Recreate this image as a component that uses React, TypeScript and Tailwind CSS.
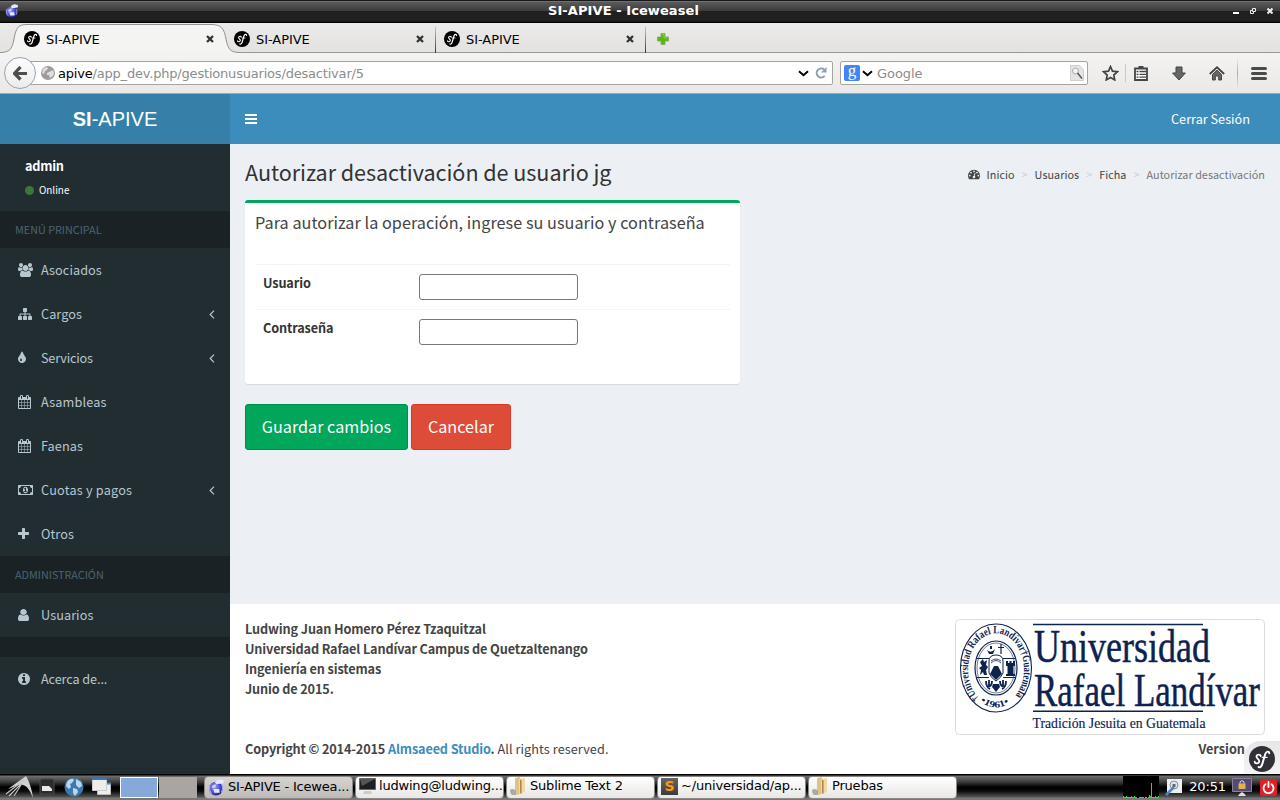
import React, { useId } from "react";

/* ---------- Icons ---------- */

const ICONS = {
  users: {
    box: "64 0 1920 1792",
    w: 15,
    d: "M657 896q-162 5-265 128h-134q-82 0-138-40.5t-56-118.5q0-353 124-353 6 0 43.5 21t97.5 42.5 119 21.5q67 0 133-23-5 37-5 66 0 139 81 256zm1071 637q0 120-73 189.5t-194 69.5h-874q-121 0-194-69.5t-73-189.5q0-53 3.5-103.5t14-109 26.5-108.5 43-97.5 62-81 85.5-53.5 111.5-20q10 0 43 21.5t73 48 107 48 135 21.5 135-21.5 107-48 73-48 43-21.5q61 0 111.5 20t85.5 53.5 62 81 43 97.5 26.5 108.5 14 109 3.5 103.5zm-1024-1277q0 106-75 181t-181 75-181-75-75-181 75-181 181-75 181 75 75 181zm704 384q0 159-112.5 271.5t-271.5 112.5-271.5-112.5-112.5-271.5 112.5-271.5 271.5-112.5 271.5 112.5 112.5 271.5zm576 225q0 78-56 118.5t-138 40.5h-134q-103-123-265-128 81-117 81-256 0-29-5-66 66 23 133 23 59 0 119-21.5t97.5-42.5 43.5-21q124 0 124 353zm-128-609q0 106-75 181t-181 75-181-75-75-181 75-181 181-75 181 75 75 181z",
  },
  sitemap: {
    box: "0 0 1792 1792",
    w: 14,
    d: "M1792 1248v320q0 40-28 68t-68 28h-320q-40 0-68-28t-28-68v-320q0-40 28-68t68-28h96v-192h-512v192h96q40 0 68 28t28 68v320q0 40-28 68t-68 28h-320q-40 0-68-28t-28-68v-320q0-40 28-68t68-28h96v-192h-512v192h96q40 0 68 28t28 68v320q0 40-28 68t-68 28h-320q-40 0-68-28t-28-68v-320q0-40 28-68t68-28h96v-192q0-52 38-90t90-38h512v-192h-96q-40 0-68-28t-28-68v-320q0-40 28-68t68-28h320q40 0 68 28t28 68v320q0 40-28 68t-68 28h-96v192h512q52 0 90 38t38 90v192h96q40 0 68 28t28 68z",
  },
  tint: {
    box: "384 0 1024 1792",
    w: 8,
    d: "M896 1152q0-36-20-69-1-1-15.5-22.5t-25.5-38-25-44-21-50.5q-4-16-21-16t-21 16q-7 23-21 50.5t-25 44-25.5 38-15.5 22.5q-20 33-20 69 0 53 37.5 90.5t90.5 37.5 90.5-37.5 37.5-90.5zm512-128q0 212-150 362t-362 150-362-150-150-362q0-145 81-275 6-9 62.5-90.5t101-151 99.5-178 83-201.5q9-30 34-47t51-17 51.5 17 33.5 47q28 93 83 201.5t99.5 178 101 151 62.5 90.5q81 127 81 275z",
  },
  calendar: {
    box: "64 0 1664 1792",
    w: 13,
    d: "M192 1664h288v-288h-288v288zm352 0h320v-288h-320v288zm-352-352h288v-320h-288v320zm352 0h320v-320h-320v320zm-352-384h288v-288h-288v288zm736 736h320v-288h-320v288zm-384-736h320v-288h-320v288zm768 736h288v-288h-288v288zm-384-352h320v-320h-320v320zm-352-864v-288q0-13-9.5-22.5t-22.5-9.5h-64q-13 0-22.5 9.5t-9.5 22.5v288q0 13 9.5 22.5t22.5 9.5h64q13 0 22.5-9.5t9.5-22.5zm736 864h288v-320h-288v320zm-384-384h320v-288h-320v288zm384 0h288v-288h-288v288zm32-480v-288q0-13-9.5-22.5t-22.5-9.5h-64q-13 0-22.5 9.5t-9.5 22.5v288q0 13 9.5 22.5t22.5 9.5h64q13 0 22.5-9.5t9.5-22.5zm384-64v1280q0 52-38 90t-90 38h-1408q-52 0-90-38t-38-90v-1280q0-52 38-90t90-38h128v-96q0-66 47-113t113-47h64q66 0 113 47t47 113v96h384v-96q0-66 47-113t113-47h64q66 0 113 47t47 113v96h128q52 0 90 38t38 90z",
  },
  money: {
    box: "0 0 1920 1792",
    w: 15,
    d: "M768 1152h384v-96h-128v-448h-114l-148 137 77 80q42-37 55-57h2v288h-128v96zm512-256q0 70-21 142t-59.5 134-101.5 101-138 39-138-39-101.5-101-59.5-134-21-142 21-142 59.5-134 101.5-101 138-39 138 39 101.5 101 59.5 134 21 142zm512 256v-512q-106 0-181-75t-75-181h-1152q0 106-75 181t-181 75v512q106 0 181 75t75 181h1152q0-106 75-181t181-75zm128-832v1152q0 26-19 45t-45 19h-1792q-26 0-45-19t-19-45v-1152q0-26 19-45t45-19h1792q26 0 45 19t19 45z",
  },
  plus: {
    box: "192 0 1408 1792",
    w: 11,
    d: "M1600 736v192q0 40-28 68t-68 28h-416v416q0 40-28 68t-68 28h-192q-40 0-68-28t-28-68v-416h-416q-40 0-68-28t-28-68v-192q0-40 28-68t68-28h416v-416q0-40 28-68t68-28h192q40 0 68 28t28 68v416h416q40 0 68 28t28 68z",
  },
  user: {
    box: "256 0 1280 1792",
    w: 11,
    d: "M1536 1399q0 109-62.5 187t-150.5 78h-854q-88 0-150.5-78t-62.5-187q0-85 8.5-160.5t31.5-152 58.5-131 94-89 134.5-34.5q131 128 313 128t313-128q76 0 134.5 34.5t94 89 58.5 131 31.5 152 8.5 160.5zm-256-887q0 159-112.5 271.5t-271.5 112.5-271.5-112.5-112.5-271.5 112.5-271.5 271.5-112.5 271.5 112.5 112.5 271.5z",
  },
  info: {
    box: "128 0 1536 1792",
    w: 12,
    d: "M1152 1376v-160q0-14-9-23t-23-9h-96v-512q0-14-9-23t-23-9h-320q-14 0-23 9t-9 23v160q0 14 9 23t23 9h96v320h-96q-14 0-23 9t-9 23v160q0 14 9 23t23 9h448q14 0 23-9t9-23zm-128-896v-160q0-14-9-23t-23-9h-192q-14 0-23 9t-9 23v160q0 14 9 23t23 9h192q14 0 23-9t9-23zm640 416q0 209-103 385.5t-279.5 279.5-385.5 103-385.5-103-279.5-279.5-103-385.5 103-385.5 279.5-279.5 385.5-103 385.5 103 279.5 279.5 103 385.5z",
  },
  dashboard: {
    box: "0 0 1792 1792",
    w: 12,
    d: "M384 1152q0-53-37.5-90.5t-90.5-37.5-90.5 37.5-37.5 90.5 37.5 90.5 90.5 37.5 90.5-37.5 37.5-90.5zm192-448q0-53-37.5-90.5t-90.5-37.5-90.5 37.5-37.5 90.5 37.5 90.5 90.5 37.5 90.5-37.5 37.5-90.5zm428 481l101-382q6-26-7.5-48.5t-38.5-29.5-48 6.5-30 39.5l-101 382q-60 5-107 43.5t-63 98.5q-20 77 20 146t117 89 146-20 89-117q16-60-6-117t-72-91zm660-33q0-53-37.5-90.5t-90.5-37.5-90.5 37.5-37.5 90.5 37.5 90.5 90.5 37.5 90.5-37.5 37.5-90.5zm-640-640q0-53-37.5-90.5t-90.5-37.5-90.5 37.5-37.5 90.5 37.5 90.5 90.5 37.5 90.5-37.5 37.5-90.5zm448 192q0-53-37.5-90.5t-90.5-37.5-90.5 37.5-37.5 90.5 37.5 90.5 90.5 37.5 90.5-37.5 37.5-90.5zm320 448q0 261-141 483-19 29-54 29h-1402q-35 0-54-29-141-221-141-483 0-182 71-348t191-286 286-191 348-71 348 71 286 191 191 286 71 348z",
  },
};

type IconName = keyof typeof ICONS;

function Icon({ name, height = 14 }: { name: IconName; height?: number }) {
  const icon = ICONS[name];
  return (
    <svg viewBox={icon.box} width={icon.w} height={height} preserveAspectRatio="none" fill="currentColor" className="block shrink-0">
      <path d={icon.d} />
    </svg>
  );
}

function SymfonyMark({ size, color = "#000" }: { size: number; color?: string }) {
  return (
    <svg width={size} height={size} viewBox="0 0 16 16" className="block shrink-0">
      <circle cx="8" cy="8" r="8" fill={color} />
      <g fill="none" stroke="#fff" strokeLinecap="round" strokeLinejoin="round">
        <path d="M7.200 6.300C7.300 5 4.800 4.900 4.600 6.400c-.1 1.500 2 1.700 1.700 3.200-.3 1.400-2.700 1.500-2.800.1" strokeWidth="1.100" />
        <path d="M12.500 4.500c0-1.500-1.900-1.400-2.500.4L8.200 11c-.5 1.800-1.500 2.500-2.300 1.900" strokeWidth="1.200" />
        <path d="M8.200 7h2.900" strokeWidth=".8" />
      </g>
    </svg>
  );
}

function IceweaselIcon({ size }: { size: number }) {
  const id = useId();
  return (
    <svg width={size} height={size} viewBox="0 0 16 16" className="block shrink-0">
      <defs>
        <radialGradient id={id} cx=".4" cy=".4" r=".65">
          <stop offset="0" stopColor="#9ba3f4" />
          <stop offset=".6" stopColor="#4a4fd6" />
          <stop offset="1" stopColor="#16168a" />
        </radialGradient>
      </defs>
      <circle cx="7.500" cy="9" r="6.500" fill={`url(#${id})`} />
      <path d="M6.500 3.500C7.500 1 10 0 12.500.5c3 .5 3 2.500 1.500 3.500-2 .8-4 .2-5.500 1.200z" fill="#e4e8fa" />
      <path d="M3.500 7q2-2.500 4.500-1.500l-1 2.500-2.500 1z" fill="#c5cbfa" />
      <path d="M5 9.500h5.500l.5 3.500H6z" fill="#e6e8fc" />
      <path d="M2 6c-1 2.500-.5 5.500 1.500 7.500M13 6c1 2 .8 4.500-.5 6.500" stroke="#a5acf2" strokeWidth="1" fill="none" />
    </svg>
  );
}

function CloseX() {
  return (
    <svg width="8" height="8" viewBox="0 0 8 8" className="block shrink-0">
      <path d="M1 1l6 6M7 1L1 7" stroke="#2e3436" strokeWidth="2.300" />
    </svg>
  );
}

function ChevronDown() {
  return (
    <svg width="11" height="7" viewBox="0 0 11 7" className="block shrink-0">
      <path d="M1 1.200l4.500 4 4.500-4" stroke="#000" strokeWidth="1.900" fill="none" />
    </svg>
  );
}

function FolderIcon() {
  return (
    <svg width="17" height="18" viewBox="0 0 17 18" className="block shrink-0">
      <path d="M5 1l5-1v17l-5 1z" fill="#e2c184" />
      <path d="M9 2l6-1v14l-6 2z" fill="#f2d9a2" />
      <path d="M10 2.500l1.600 1v13.500L10 16z" fill="#a9895a" />
      <path d="M0 13c2-1.500 4-1 6 .5V18H2c-1.500-1-2-3-2-5z" fill="#a9a9a6" />
    </svg>
  );
}

/* ---------- Window chrome ---------- */

function TitleBar() {
  return (
    <div className="grid h-[23px] grid-cols-[548px_auto_1fr] items-center border-b border-black bg-[linear-gradient(#18181b_0,#18181b_1px,#87878a_1px,#5a5a5a_2px,#3b3b3b_11px,#202020_11px,#202020_20px,#101010_23px)]">
      <div className="pl-[5px]"><IceweaselIcon size={14} /></div>
      <div className="-mt-px text-[13px] leading-[20px] font-bold tracking-[0.006em] text-white">SI-APIVE - Iceweasel</div>
      <div className="flex items-center justify-end gap-[11px] pr-[7px]">
        <svg width="6" height="6" viewBox="0 0 6 6"><path d="M0 5h6" stroke="#fff" strokeWidth="2" /></svg>
        <svg width="6" height="6" viewBox="0 0 6 6"><path d="M2.500.5h3v3h-3zM2.500 2.500h-2v3h3v-2" stroke="#eee" fill="none" /></svg>
        <svg width="6" height="6" viewBox="0 0 6 6"><path d="M.5.500l5 5M5.500.5l-5 5" stroke="#eee" strokeWidth="2" /></svg>
      </div>
    </div>
  );
}

function TabLabel() {
  return <span className="mt-[2px] ml-[6px] flex-1 text-[13px] tracking-[-0.004em]">SI-APIVE</span>;
}

function TabBar() {
  return (
    <div className="relative flex h-[30px] bg-[linear-gradient(#ebeae9,#e3e2e0)] shadow-[inset_0_-1px_0_#9b9997]">
      <svg width="240" height="30" viewBox="0 0 240 30" className="absolute top-0 left-0">
        <path d="M0 29.500C10 29.500 12 26 14 16 16 5 18 1.500 27 1.500H211C221 1.500 224 5 226 16 228 26 230 29.500 240 29.500V31H0z" fill="#f4f4f3" />
        <path d="M0 29.500C10 29.500 12 26 14 16 16 5 18 1.500 27 1.500H211C221 1.500 224 5 226 16 228 26 230 29.500 240 29.500" fill="none" stroke="#93918f" />
      </svg>
      <div className="relative flex w-[226px] items-center pt-px pr-[12px] pl-[24px]">
        <SymfonyMark size={16} /><TabLabel /><CloseX />
      </div>
      <div className="relative flex w-[210px] items-center pt-px pr-[12px] pl-[8px]">
        <SymfonyMark size={16} /><TabLabel /><CloseX />
      </div>
      <div className="relative flex w-[210px] items-center pt-px pr-[12px] pl-[8px]">
        <div className="absolute top-[3px] left-[-1px] h-[27px] w-px bg-[linear-gradient(#cfcecd,#333)]" />
        <SymfonyMark size={16} /><TabLabel /><CloseX />
      </div>
      <div className="relative flex items-center pt-px pl-[11px]">
        <div className="absolute top-[3px] left-[-1px] h-[27px] w-px bg-[linear-gradient(#cfcecd,#333)]" />
        <svg width="12" height="12" viewBox="0 0 12 12"><path d="M4 .5h4V4h3.500v4H8v3.500H4V8H.5V4H4z" fill="#5bb70e" stroke="#7fa56a" strokeWidth=".8" strokeLinejoin="round" /><path d="M5 1.500h2V5h3.500" fill="none" stroke="#8fd84e" strokeWidth=".8" /></svg>
      </div>
    </div>
  );
}

function NavBar() {
  return (
    <div className="flex h-[41px] items-center border-b border-[#a9a7a5] bg-[linear-gradient(#f3f3f2,#ebe9e8)] pl-[4px]">
      <div className="relative z-10 flex size-8 shrink-0 items-center justify-center rounded-full border border-[#97a3b5] bg-[linear-gradient(#fdfdfd,#ececeb)]">
        <svg width="15" height="15" viewBox="0 0 15 15"><path d="M7.500 1L1.500 7.500l6 6M2 7.500h12" fill="none" stroke="#4d4d4d" strokeWidth="3.200" /></svg>
      </div>
      <div className="-ml-[8px] flex h-[24px] w-[805px] items-center rounded-[2px] border border-[#a6a4a2] bg-white pr-[5px] pl-[12px]">
        <svg width="14" height="14" viewBox="0 0 14 14"><circle cx="7" cy="7" r="7" fill="#9d9d9d" /><path d="M2 3c2-2 4-2 5-1L6 4 4 5l-1 3-2-1zM8 6l4-2 1 3-1 3-3 2-1-3H6V7z" fill="#dedede" /></svg>
        <span className="mt-[2px] ml-[3px] flex-1 text-[13px] tracking-[-0.015em] text-[#8c8c8c]"><span className="text-black">apive</span>/app_dev.php/gestionusuarios/desactivar/5</span>
        <ChevronDown />
        <svg width="12" height="12" viewBox="0 0 12 12" className="ml-[6px]"><path d="M9.700 8.800A4.500 4.500 0 1 1 9 2.400" fill="none" stroke="#8c9eae" strokeWidth="2" /><path d="M11.500 0v5.500H6z" fill="#8c9eae" /></svg>
      </div>
      <div className="ml-[7px] flex h-[24px] w-[248px] items-center rounded-[2px] border border-[#a6a4a2] bg-white px-[3px]">
        <div className="flex size-4 items-center justify-center rounded-[2px] bg-[#4285f4] font-['Liberation_Serif',serif] text-[17px] leading-[10px] text-white"><span className="relative -top-[2px]">g</span></div>
        <div className="ml-[2px]"><ChevronDown /></div>
        <span className="mt-[2px] ml-[4px] flex-1 text-[13px] tracking-[-0.005em] text-[#8c8c8c]">Google</span>
        <svg width="14" height="16" viewBox="0 0 14 16"><path d="M.5.500h9l4 4v11H.5z" fill="#e4e4e4" stroke="#cfcfcf" /><circle cx="5.500" cy="6" r="3" fill="#f4f4f4" stroke="#aaa" /><path d="M7.500 8l4.500 5.500" stroke="#555" strokeWidth="1.500" /></svg>
      </div>
      <svg width="17" height="16" viewBox="0 0 17 16" className="ml-[13.500px]"><path d="M8.500 1.600l2 4.500 4.900.6-3.600 3.300.9 4.900-4.200-2.400-4.200 2.400.9-4.900L1.600 6.700l4.900-.6z" fill="none" stroke="#444" strokeWidth="1.700" /></svg>
      <div className="ml-[6.500px] h-[18px] w-px bg-[#c5c9ce]" />
      <svg width="14" height="15" viewBox="0 0 14 15" className="ml-[8px]"><path d="M1 2.500h12V14H1z" fill="#fff" stroke="#444" strokeWidth="1.800" /><path d="M4.500 0h5v3h-5z" fill="#444" /><path d="M2.500 5.500h2M5.500 5.500h6.500M2.500 8.300h2M5.500 8.300h6.500M2.500 11.100h2M5.500 11.100h6.500" stroke="#444" strokeWidth="1.300" /></svg>
      <svg width="14" height="15" viewBox="0 0 14 15" className="ml-[24px]"><path d="M4 1h6v6h3.400L7 14 .6 7H4z" fill="#666" stroke="#444" /></svg>
      <svg width="16" height="15" viewBox="0 0 16 15" className="ml-[23px]"><path d="M3.500 8.500L8 4.200l4.500 4.300V14H9.700v-4H6.300v4H3.500z" fill="#666" stroke="#444" /><path d="M.8 8L8 1.300 15.200 8" fill="none" stroke="#444" strokeWidth="1.800" /></svg>
      <div className="ml-[12px] h-[32px] w-px bg-[linear-gradient(transparent,#a5abb3,transparent)]" />
      <svg width="16" height="13" viewBox="0 0 16 13" className="ml-[13px]"><path d="M1.500 1.500h13M1.500 6.500h13M1.500 11.500h13" stroke="#4a4a4a" strokeWidth="3" strokeLinecap="round" /></svg>
    </div>
  );
}

/* ---------- Page ---------- */

function SideItem({ icon, label, tree, tracking = "tracking-[0.005em]" }: { icon: IconName; label: string; tree?: boolean; tracking?: string }) {
  return (
    <div className="flex h-11 items-center pr-[15px] pl-[18px] text-[12.700px] leading-5 text-[#b8c7ce]">
      <div className="w-[23px]"><Icon name={icon} /></div>
      <span className={"flex-1 " + tracking}>{label}</span>
      {tree && (
        <svg width="6" height="9" viewBox="0 0 6 9"><path d="M5 .7L1.200 4.500 5 8.300" fill="none" stroke="#b8c7ce" strokeWidth="1.200" /></svg>
      )}
    </div>
  );
}

function SideHeader({ children }: { children: React.ReactNode }) {
  return <div className="h-[37px] bg-[#1a2226] pl-[15px] text-[10.800px] leading-[37px] text-[#4b646f]">{children}</div>;
}

function Sidebar() {
  return (
    <aside className="w-[230px] shrink-0 bg-[#222d32]">
      <div className="flex h-[67px] flex-col pt-[12px] pl-[25px] text-white">
        <div className="text-[12.700px] leading-5 font-bold tracking-[-0.020em]">admin</div>
        <div className="mt-[6px] flex items-center gap-[5px] text-[9.900px] leading-4"><span className="size-[9px] rounded-full bg-[#3c763d]" />Online</div>
      </div>
      <SideHeader>MENÚ PRINCIPAL</SideHeader>
      <SideItem icon="users" label="Asociados" />
      <SideItem icon="sitemap" label="Cargos" tree />
      <SideItem icon="tint" label="Servicios" tree tracking="tracking-[-0.015em]" />
      <SideItem icon="calendar" label="Asambleas" tracking="tracking-[0.012em]" />
      <SideItem icon="calendar" label="Faenas" />
      <SideItem icon="money" label="Cuotas y pagos" tree tracking="tracking-[0.016em]" />
      <SideItem icon="plus" label="Otros" />
      <SideHeader>ADMINISTRACIÓN</SideHeader>
      <SideItem icon="user" label="Usuarios" />
      <div className="h-5 bg-[#1a2226]" />
      <SideItem icon="info" label="Acerca de..." tracking="tracking-[-0.008em]" />
    </aside>
  );
}

function Field({ label, type }: { label: string; type: string }) {
  return (
    <label className="flex h-[45px] border-t border-[#f4f4f4] pt-[8px] pl-[8px]">
      <span className="w-[155.500px] text-[12.700px] leading-5 font-bold tracking-[-0.010em] text-[#333]">{label}</span>
      <input type={type} className="mt-px h-[26px] w-[159.500px] rounded-[3px] border border-[#777] bg-white px-1 outline-none" />
    </label>
  );
}

function UniversityLogo() {
  return (
    <svg width="310" height="116" viewBox="0 0 310 116" className="block overflow-visible">
      <rect x=".5" y=".5" width="309" height="115" rx="4" fill="#fff" stroke="#ddd" />
      <defs>
        <path id="sealRing" d="M24 79A28 36 0 1 1 58 79" />
        <path id="sealYear" d="M25 82Q40.500 95 57 82" />
      </defs>
      <g fill="none" stroke="#0c2350">
        <ellipse cx="41" cy="49" rx="35.500" ry="44" strokeWidth="1.100" />
        <ellipse cx="41" cy="49" rx="21" ry="27" strokeWidth="1.200" />
        <ellipse cx="41" cy="49" rx="19" ry="25" strokeWidth=".6" />
        <path d="M22 39.500h12M48 39.500h12M22 58.500h12M48 58.500h12" strokeWidth="1" />
        <path d="M46 25v10M43 28.500h6" strokeWidth="1.200" />
        <path d="M34 54V42q0-6 7-6t7 6v12q-2 5-7 8-5-3-7-8z" strokeWidth="1" fill="#fff" />
        <path d="M36 44q5-5 10 0M36 42q5-4 10 0" strokeWidth=".8" />
        <path d="M31 62q0 6 4 8M34 61v6M37 62q0 6-5 6M51 62q0 6-4 8M48 61v6M45 62q0 6 5 6" strokeWidth="1.800" />
      </g>
      <g fill="#0c2350">
        <path d="M35 55l4-8h4l4 8-6 6z" />
        <path d="M32 31q4 4 8-1l-2 5h-4zM35 27h2v3h-2z" />
        <path d="M25 43l3-3 1 3 3-2-1 5 2 2-2 3 1 5h-3l-1-3-3 3 1-5-2-2 3-2z" />
        <path d="M51 42h2v2h1.500v-2h2v2H58v-2h2v5h-1.500v8H60v2h-9v-2h1.500v-8H51z" />
        <path d="M38 65h6l1 3-4 5-4-5z" />
      </g>
      <text fill="#0c2350" fontFamily="'Liberation Serif', serif" fontWeight="bold" fontSize="11">
        <textPath href="#sealRing" textLength="160" lengthAdjust="spacingAndGlyphs">†Universidad Rafael Landívar†Guatemala</textPath>
      </text>
      <text fill="#0c2350" fontFamily="'Liberation Serif', serif" fontWeight="bold" fontSize="9">
        <textPath href="#sealYear" textLength="32" lengthAdjust="spacingAndGlyphs">•1961•</textPath>
      </text>
      <path d="M78 5.500h170M78 92.300h170" stroke="#0c2350" strokeWidth="1.400" />
      <g fill="#0c2350" stroke="#0c2350" strokeWidth=".5" fontFamily="'Liberation Serif', serif">
        <text x="79" y="43" fontSize="46" textLength="176" lengthAdjust="spacingAndGlyphs">Universidad</text>
        <text x="79" y="86.500" fontSize="46" textLength="226" lengthAdjust="spacingAndGlyphs">Rafael Landívar</text>
        <text x="77.500" y="108.500" fontSize="15.500" strokeWidth=".15" textLength="173" lengthAdjust="spacingAndGlyphs">Tradición Jesuita en Guatemala</text>
      </g>
    </svg>
  );
}

function Page() {
  return (
    <div className="flex h-[680px] flex-col overflow-hidden font-['Noto_Sans_CJK_SC',sans-serif]">
      <header className="flex h-[50px] shrink-0 items-center bg-[#3c8dbc] text-white">
        <div className="h-[50px] w-[230px] bg-[#367fa9] text-center font-['Liberation_Sans',sans-serif] text-[20px] leading-[50px]"><b>SI</b>-APIVE</div>
        <svg width="12" height="10" viewBox="0 0 12 10" className="ml-[15px]"><path d="M0 1h12M0 5h12M0 9h12" stroke="#fff" strokeWidth="2" /></svg>
        <span className="mr-[30px] ml-auto text-[12.700px] leading-5">Cerrar Sesión</span>
      </header>
      <div className="flex min-h-0 flex-1">
        <Sidebar />
        <div className="flex flex-1 flex-col">
          <main className="flex h-[460px] flex-col bg-[#ecf0f5] px-[15px] pt-[14px] text-[#333]">
            <div className="flex h-[42px] justify-between">
              <h1 className="text-[21.600px] leading-[27px] tracking-[-0.003em]">Autorizar desactivación de usuario jg</h1>
              <nav className="flex h-8 items-center text-[10.800px] leading-4 tracking-[0.004em] text-[#444]">
                <Icon name="dashboard" height={12} />
                <span className="ml-[7px]">Inicio</span>
                <span className="px-[7px] text-[#ccc]">&gt;</span>
                <span>Usuarios</span>
                <span className="px-[7px] text-[#ccc]">&gt;</span>
                <span>Ficha</span>
                <span className="px-[7px] text-[#ccc]">&gt;</span>
                <span className="text-[#777]">Autorizar desactivación</span>
              </nav>
            </div>
            <section className="h-[184px] w-[495px] rounded-[3px] border-t-[3px] border-[#00a65a] bg-white px-[10px] shadow-[0_1px_1px_rgba(0,0,0,0.1)]">
              <h2 className="h-[61px] pt-[9px] text-[16.200px] leading-5 tracking-[0.003em] text-[#444]">Para autorizar la operación, ingrese su usuario y contraseña</h2>
              <Field label="Usuario" type="text" />
              <Field label="Contraseña" type="password" />
            </section>
            <div className="mt-5 flex gap-[3px] text-[16.200px] leading-6 text-white">
              <button className="h-[46px] w-[163px] rounded-[3px] border border-[#008d4c] bg-[#00a65a] pb-[2px]">Guardar cambios</button>
              <button className="h-[46px] w-[100px] rounded-[3px] border border-[#d73925] bg-[#dd4b39] pb-[2px]">Cancelar</button>
            </div>
          </main>
          <footer className="relative flex flex-1 justify-between bg-white px-[15px] pt-[15px] text-[12.700px] leading-5 text-[#444]">
            <div>
              <div className="font-bold tracking-[-0.010em]">Ludwing Juan Homero Pérez Tzaquitzal</div>
              <div className="font-bold tracking-[-0.011em]">Universidad Rafael Landívar Campus de Quetzaltenango</div>
              <div className="font-bold tracking-[-0.011em]">Ingeniería en sistemas</div>
              <div className="font-bold tracking-[-0.011em]">Junio de 2015.</div>
              <div className="mt-10"><b className="tracking-[-0.011em]">Copyright © 2014-2015 <span className="text-[#3c8dbc]">Almsaeed Studio</span>.</b><span className="tracking-[0.006em]"> All rights reserved.</span></div>
            </div>
            <div>
              <UniversityLogo />
              <div className="mt-[4px] pr-[20px] text-right font-bold">Version</div>
            </div>
            <div className="absolute right-0 bottom-0 flex h-[33px] w-[36px] items-center justify-center rounded-tl-[16px] bg-[linear-gradient(#e6e6e6,#f4f4f4)] pt-[3px]"><SymfonyMark size={26} color="#303036" /></div>
          </footer>
        </div>
      </div>
    </div>
  );
}

/* ---------- Desktop panel ---------- */

function Task({ icon, label, active }: { icon: React.ReactNode; label: string; active?: boolean }) {
  return (
    <div className={"flex h-[23px] w-[149px] shrink-0 items-center gap-[3px] rounded-[4px] border-[1.500px] border-[#8b8886] pl-[3px] text-[13px] tracking-[-0.015em] whitespace-nowrap text-black " + (active ? "bg-[linear-gradient(#d6d3d1,#bdbab8)]" : "bg-[linear-gradient(#ffffff,#e8e7e6)] pb-[2px]")}>
      {icon}
      <span>{label}</span>
    </div>
  );
}

function Taskbar() {
  const load = [2, 1, 1, 2, 1, 1, 1, 1, 2, 1, 1, 2, 1, 1, 0, 0, 1, 1, 1, 1, 1, 0, 1, 1, 0, 1, 3, 2, 15, 1, 1, 1, 2, 1, 1, 2];
  return (
    <div className="flex h-[26px] items-center bg-[linear-gradient(#000_0,#000_1px,#707070_2px,#3c3c3c_8px,#000_13px,#0a0a0a_17px,#555_23px,#777_24px,#777_26px)] pl-[4px]">
      <svg width="32" height="24" viewBox="0 0 32 24"><path d="M4 14L22 1c3 5 6 13 7 22-3-8-6-12-10-13-4-1-7 1-12 3z" fill="#cfcfcf" /><path d="M2 19L20 5M5 21L17 9M10 21l7-11" stroke="#c5c5c5" strokeWidth="1.100" /></svg>
      <svg width="16" height="18" viewBox="0 0 16 18" className="ml-[3px]"><path d="M1 3q0-2 2-2h10q2 0 2 2v13H1z" fill="#2c2c2c" stroke="#484848" /><path d="M3 8h7l3 3v2H3z" fill="#e8e8e8" /></svg>
      <svg width="20" height="20" viewBox="0 0 20 20" className="ml-[9px]"><circle cx="10" cy="10" r="9.500" fill="#3f78ae" /><path d="M3 5c3-4 6-4 7-2L8 6 6 7l1 3-2 2-3-3zM12 2l5 3 1 4-3 2-3-3zM9 11l4 1 1 3-3 4-2-3z" fill="#bcd7ec" /></svg>
      <svg width="20" height="18" viewBox="0 0 20 18" className="ml-[8px]"><path d="M5.500 5.500h13v11h-13z" fill="#eee" stroke="#bbb" /><path d="M5 4.500h14v2H5z" fill="#4d83c0" /><path d="M.5 1.500h14v11H.5z" fill="#ededeb" stroke="#ccc" /><path d="M0 0h15v2H0z" fill="#3b74b8" /></svg>
      <div className="ml-[8px] h-[21px] w-[38px] border border-white bg-[#85a9d8]" />
      <div className="ml-px h-[21px] w-[38px] bg-[#aaa5a1]" />
      <div className="ml-[7px] flex gap-[2px]">
        <Task active icon={<IceweaselIcon size={17} />} label="SI-APIVE - Icewea..." />
        <Task icon={<svg width="17" height="17" viewBox="0 0 17 17" className="block shrink-0"><path d="M.5.500h16v11H.5z" fill="#1d1f20" stroke="#666" /><path d="M1 1h15L3 8z" fill="#555" /><path d="M5 13h7l1 3H4z" fill="#ccc" /></svg>} label="ludwing@ludwing..." />
        <Task icon={<FolderIcon />} label="Sublime Text 2" />
        <Task icon={<div className="flex size-[17px] shrink-0 items-center justify-center bg-[linear-gradient(#666,#3b3b3b)] text-[14px] leading-4 font-bold text-[#ff9800]"><span>S</span></div>} label="~/universidad/ap..." />
        <Task icon={<FolderIcon />} label="Pruebas" />
      </div>
      <svg width="36" height="22" viewBox="0 0 36 22" className="mr-[6px] ml-auto"><path d="M0 0h36v22H0z" fill="#000" />{load.map((v, i) => <rect key={i} x={i} y={22 - v} width="1" height={v} fill="#0f0" />)}</svg>
      <svg width="17" height="17" viewBox="0 0 17 17"><path d="M2 0h15v14H2z" fill="#eee" /><circle cx="9" cy="6" r="4" fill="#dbe5f0" stroke="#8093aa" /><path d="M9 8l-8 8" stroke="#4f87c5" strokeWidth="2.600" /><path d="M7.500 5h3v3h-3z" fill="#666" /></svg>
      <span className="ml-[7px] text-[13px] tracking-[-0.010em] text-white">20:51</span>
      <svg width="20" height="20" viewBox="0 0 20 20" className="ml-[6px]"><path d="M.5 1.500h19v13H.5z" fill="#56487a" stroke="#8a8298" /><path d="M6 19q1-2.500 4-4 3 1.500 4 4z" fill="#ddd" /><path d="M6.500 6.500h7V12h-7z" fill="#e1b34a" /><path d="M8 6.500V5q2-3 4 0v1.500" fill="none" stroke="#ddd" /></svg>
      <svg width="17" height="17" viewBox="0 0 17 17" className="mr-[3px] ml-[8px]"><rect width="17" height="17" rx="2" fill="#e01f26" /><path d="M5.500 5.200a5 5 0 1 0 6 0M8.500 3v5" fill="none" stroke="#fff" strokeWidth="1.800" strokeLinecap="round" /></svg>
    </div>
  );
}

export default function App() {
  return (
    <div className="h-[800px] w-[1280px] overflow-hidden font-['DejaVu_Sans',sans-serif] text-black">
      <TitleBar />
      <TabBar />
      <NavBar />
      <Page />
      <Taskbar />
    </div>
  );
}
